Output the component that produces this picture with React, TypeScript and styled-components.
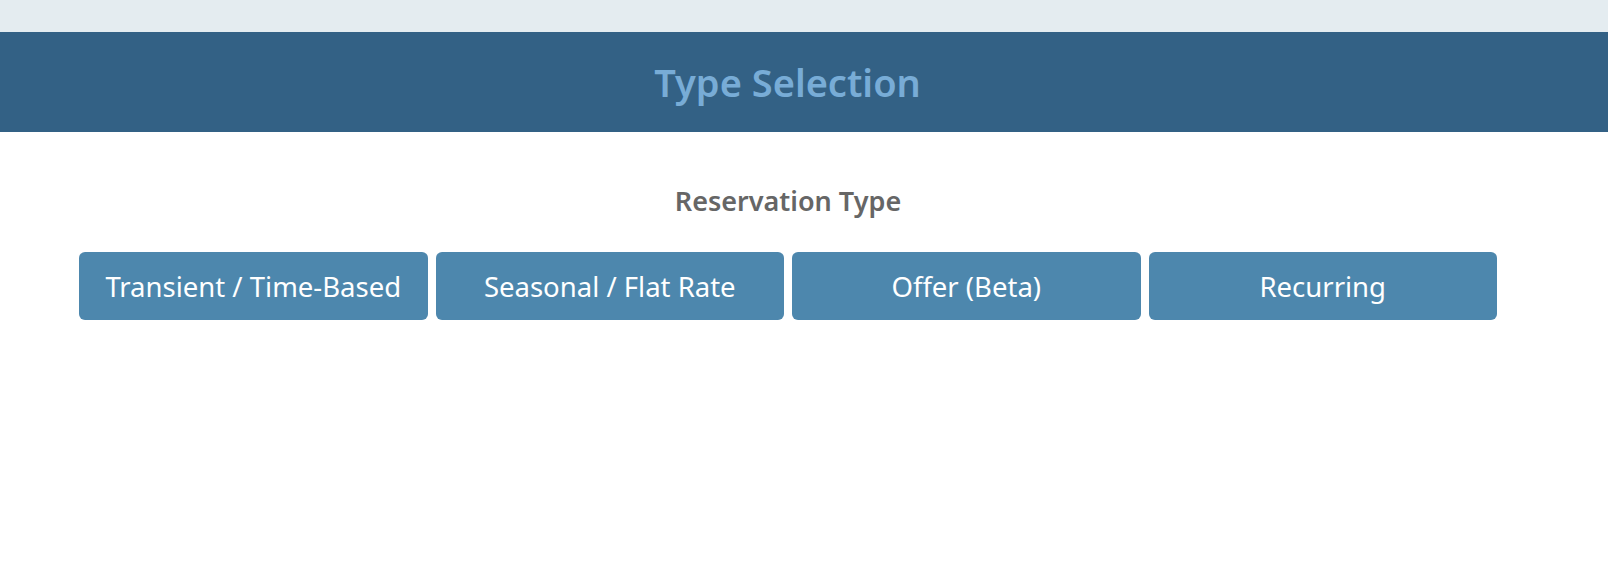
import styled, { createGlobalStyle } from 'styled-components';

const GlobalStyle = createGlobalStyle`
  html, body {
    margin: 0;
    padding: 0;
    background: #ffffff;
    font-family: "Noto Sans", "Open Sans", sans-serif;
  }
`;

const TopStrip = styled.div`
  height: 32px;
  background: #e4ecf0;
`;

const Header = styled.header`
  height: 100px;
  background: #336185;
  display: flex;
  align-items: center;
  justify-content: center;
  padding-right: 33px;
`;

const Title = styled.h1`
  margin: 0;
  font-size: 38px;
  font-weight: 600;
  color: #78acd6;
`;

const Content = styled.main`
  padding: 50px 111px 0 79px;
  display: flex;
  flex-direction: column;
  align-items: stretch;
`;

const SectionLabel = styled.h2`
  margin: 0 0 33px;
  text-align: center;
  font-size: 27px;
  font-weight: 600;
  color: #666666;
`;

const ButtonRow = styled.div`
  display: flex;
  gap: 8px;
`;

const TypeButton = styled.button`
  flex: 1;
  height: 68px;
  padding: 0;
  border: none;
  border-radius: 6px;
  background: #4d87ad;
  color: #ffffff;
  font-family: inherit;
  font-size: 27.5px;
  cursor: pointer;
`;

const types = ['Transient / Time-Based', 'Seasonal / Flat Rate', 'Offer (Beta)', 'Recurring'];

const App = () => {
  return (
    <>
      <GlobalStyle />
      <TopStrip />
      <Header>
        <Title>Type Selection</Title>
      </Header>
      <Content>
        <SectionLabel>Reservation Type</SectionLabel>
        <ButtonRow>
          {types.map((t) => (
            <TypeButton key={t}>{t}</TypeButton>
          ))}
        </ButtonRow>
      </Content>
    </>
  );
};

export default App;
